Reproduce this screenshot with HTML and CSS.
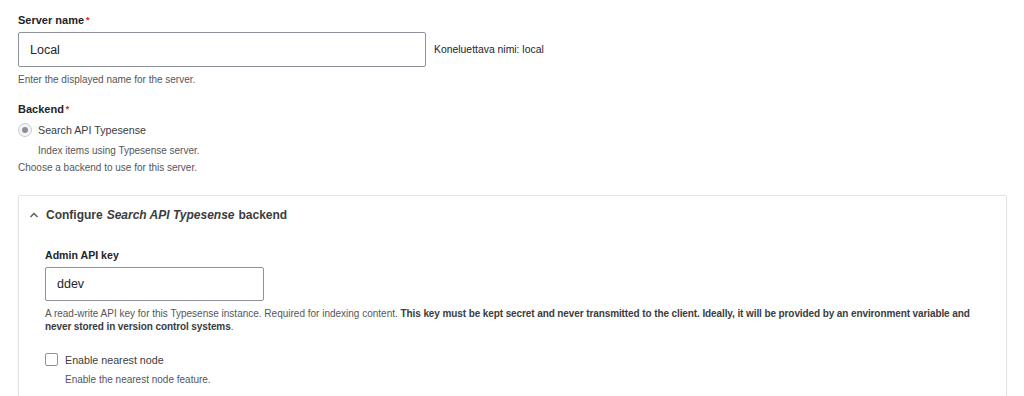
FILE: index.html
```html
<!DOCTYPE html>
<html lang="fi">
  <head>
    <meta charset="UTF-8" />
    <meta name="viewport" content="width=device-width, initial-scale=1.0" />
    <title>Server – Search API</title>
    <link rel="stylesheet" href="styles.css">
  </head>
  <body>
    <form class="server-form">
      <div class="form-item">
        <label class="form-label required" for="edit-name">Server name</label>
        <div class="field-row">
          <input class="form-text wide" id="edit-name" type="text" value="Local" />
          <span class="machine-name">Koneluettava nimi: local</span>
        </div>
        <div class="description">Enter the displayed name for the server.</div>
      </div>

      <div class="form-item backend">
        <div class="form-label required">Backend</div>
        <div class="radio-item">
          <input class="form-radio" type="radio" id="edit-backend" checked disabled />
          <label for="edit-backend">Search API Typesense</label>
        </div>
        <div class="description option-desc">Index items using Typesense server.</div>
        <div class="description">Choose a backend to use for this server.</div>
      </div>

      <details class="backend-config" open>
        <summary>
          <svg class="chevron" width="10" height="6" viewBox="0 0 10 6">
            <polyline points="1.5,5 5,1.5 8.5,5" fill="none" stroke="#55565b" stroke-width="1.4" />
          </svg>
          Configure <em>Search API Typesense</em> backend
        </summary>
        <div class="details-content">
          <div class="form-item">
            <label class="form-label" for="edit-api-key">Admin API key</label>
            <input class="form-text narrow" id="edit-api-key" type="text" value="ddev" />
            <div class="description">
              A read-write API key for this Typesense instance. Required for indexing content.
              <strong>This key must be kept secret and never transmitted to the client. Ideally, it will be provided by an environment variable and never stored in version control systems</strong>.
            </div>
          </div>

          <div class="form-item checkbox-item">
            <div class="check-row">
              <input class="form-checkbox" type="checkbox" id="edit-nearest" />
              <label for="edit-nearest">Enable nearest node</label>
            </div>
            <div class="description option-desc">Enable the nearest node feature.</div>
          </div>
        </div>
      </details>
    </form>
  </body>
</html>
```

FILE: styles.css
```css
* {
  box-sizing: border-box;
}
body {
  margin: 0;
  padding: 13px 17px 0 18px;
  font-family: "Liberation Sans", Arial, sans-serif;
  color: #232429;
  background: #fff;
}

.form-label {
  display: block;
  font-size: 11px;
  line-height: 14px;
  font-weight: bold;
  margin-bottom: 5px;
}

.details-content .form-label {
  font-size: 10.6px;
}

.form-label.required::after {
  content: "*";
  color: #dc2323;
  font-size: 9px;
  margin-left: 2px;
  vertical-align: 1px;
}

.field-row {
  display: flex;
  align-items: center;
}

.form-text {
  height: 35px;
  padding: 0 11px;
  border: 1px solid #8e929c;
  border-radius: 2px;
  font-family: inherit;
  font-size: 12.5px;
  color: #232429;
  background: #fff;
}

.form-text.wide {
  width: 408px;
}

.form-text.narrow {
  width: 219px;
  height: 34px;
}

.machine-name {
  margin-left: 8px;
  font-size: 10.4px;
  color: #232429;
}

.description {
  margin-top: 6px;
  font-size: 10px;
  line-height: 13px;
  color: #55565b;
}

.description strong {
  color: #3b3c40;
  letter-spacing: -0.1px;
}

.backend {
  margin-top: 16px;
}

.backend .form-label {
  margin-bottom: 7px;
}

.radio-item,
.check-row {
  display: flex;
  align-items: center;
  gap: 6px;
  font-size: 10.7px;
  color: #3b3c40;
}

.form-radio {
  appearance: none;
  margin: 0;
  width: 14px;
  height: 14px;
  border: 1px solid #cbccd1;
  border-radius: 50%;
  background: #f3f4f6;
  display: grid;
  place-content: center;
}

.form-radio::after {
  content: "";
  width: 6px;
  height: 6px;
  border-radius: 50%;
  background: #8e9096;
}

.option-desc {
  margin-left: 20px;
  margin-top: 7px;
}

.backend .option-desc + .description {
  margin-top: 4px;
}

.backend-config {
  margin-top: 21px;
  border: 1px solid #e2e3e8;
  border-radius: 2px;
  box-shadow: 0 1px 2px rgba(0, 0, 0, 0.04);
}

.backend-config summary {
  list-style: none;
  display: flex;
  align-items: center;
  gap: 7px;
  padding: 12px 0 12px 10px;
  font-size: 12px;
  line-height: 14px;
  font-weight: bold;
  color: #3b3c40;
}

.backend-config summary::-webkit-details-marker {
  display: none;
}

.backend-config summary em {
  margin: 0 -3px;
}

.details-content {
  padding: 14px 27px 20px 26px;
}

.checkbox-item {
  margin-top: 20px;
}

.check-row {
  gap: 7px;
}

.form-checkbox {
  appearance: none;
  margin: 0;
  width: 13px;
  height: 13px;
  border: 1px solid #8e929c;
  border-radius: 2px;
  background: #fff;
}
```
